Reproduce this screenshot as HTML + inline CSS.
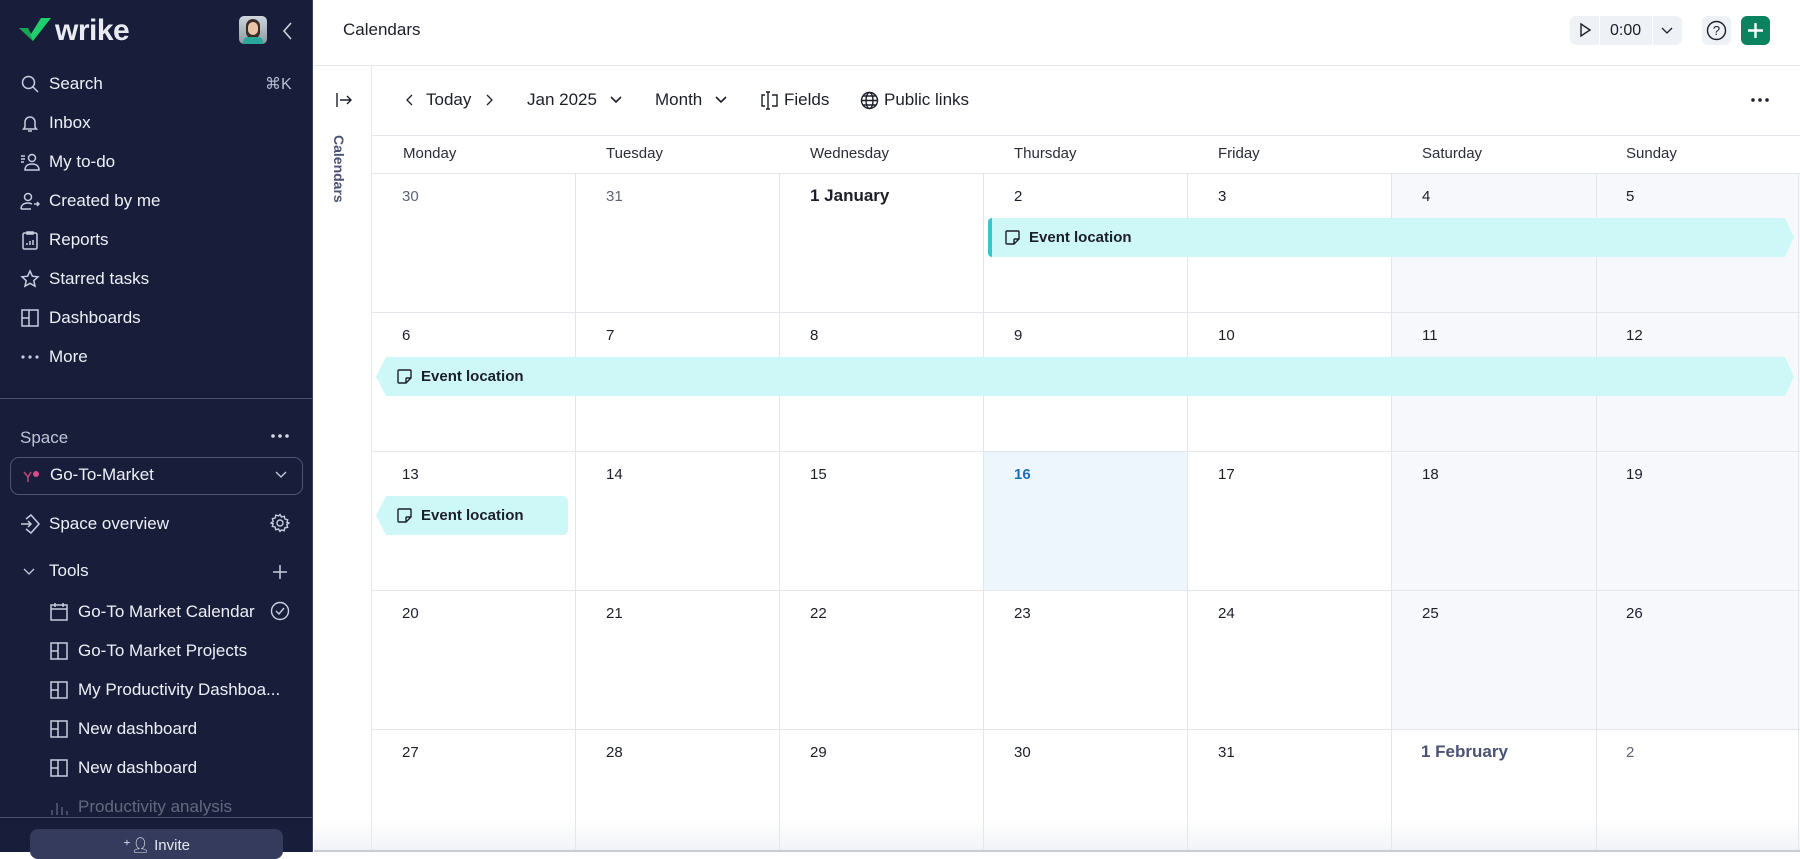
<!DOCTYPE html>
<html><head><meta charset="utf-8">
<style>
*{box-sizing:border-box;margin:0;padding:0}
body{width:1800px;height:852px;overflow:hidden;font-family:"Liberation Sans",sans-serif;background:#fff;position:relative;color:#1c1f2b}
.abs{position:absolute}
#sb{left:0;top:0;width:313px;height:852px;background:#181d3a;color:#eef0f7;border-right:1px solid #3a4060}
.nav{position:absolute;left:20px;font-size:17px;display:flex;align-items:center;height:24px;white-space:nowrap}
.nav svg{width:20px;height:20px;margin-right:9px;flex:none}
.sub{left:49px}
.hdr{font-size:15px;color:#2a2d3a;top:145px}
.dt{font-size:15px;color:#1c1f2b}
.vl{width:1px;background:#e3e6ec}
.hl{height:1px;background:#e3e6ec}
.ev{position:absolute;height:39px;background:#cdf8f7;font-size:15px;font-weight:bold;display:flex;align-items:center;color:#1c1f2b}
.ev svg{width:17px;height:17px;margin-right:8px}
.tb{font-size:17px;top:90px;color:#1c1f2b}
</style></head><body>
<div id="sb" class="abs">
  <svg class="abs" style="left:19px;top:16px" width="32" height="26" viewBox="0 0 32 26"><path d="M0 12 L9 12 L12 18 L22 2 L32 2 L14 25 Z" fill="#1fcf6b"/><path d="M0 12 L9 12 L14 25 Z" fill="#15a555"/></svg>
  <div class="abs" style="left:55px;top:14px;font-size:30px;font-weight:bold;color:#e9ebf3;letter-spacing:-0.5px">wrike</div>
  <div class="abs" style="left:239px;top:16px;width:28px;height:28px;border-radius:5px;background:linear-gradient(#cfd6dc,#8a9aa3);overflow:hidden"><div class="abs" style="left:7px;top:3px;width:14px;height:20px;border-radius:7px;background:#3b2c25"></div><div class="abs" style="left:9px;top:6px;width:10px;height:13px;border-radius:5px;background:#e8c4a8"></div><div class="abs" style="left:4px;top:21px;width:20px;height:10px;border-radius:6px;background:#2aa79a"></div></div>
  <svg class="abs" style="left:281px;top:21px" width="14" height="20" viewBox="0 0 14 20"><path d="M10 2 L3 10 L10 18" stroke="#cfd3e0" stroke-width="1.6" fill="none"/></svg>

  <div class="nav" style="top:72px"><svg viewBox="0 0 20 20" fill="none" stroke="#c9cde0" stroke-width="1.5"><circle cx="8.5" cy="8.5" r="6"/><path d="M13 13l5 5"/></svg>Search<span style="position:absolute;left:245px;color:#b9bdd0;font-size:16px">⌘K</span></div>
  <div class="nav" style="top:111px"><svg viewBox="0 0 20 20" fill="none" stroke="#c9cde0" stroke-width="1.5"><path d="M5 14V9a5 5 0 0110 0v5l1.5 2h-13z M8 18h4"/></svg>Inbox</div>
  <div class="nav" style="top:150px"><svg viewBox="0 0 20 20" fill="none" stroke="#c9cde0" stroke-width="1.5"><path d="M1 4h4M1 7h4M1 10h3"/><circle cx="12" cy="6" r="3.5"/><path d="M5 18c0-4 3-6 7-6s7 2 7 6z"/></svg>My to-do</div>
  <div class="nav" style="top:189px"><svg viewBox="0 0 20 20" fill="none" stroke="#c9cde0" stroke-width="1.5"><circle cx="8" cy="6" r="3.5"/><path d="M1 18c0-4 3-6 7-6 2 0 3 .5 4 1M1 18h10M14 13h5M17 11l2 2-2 2"/></svg>Created by me</div>
  <div class="nav" style="top:228px"><svg viewBox="0 0 20 20" fill="none" stroke="#c9cde0" stroke-width="1.5"><rect x="3" y="3" width="14" height="16" rx="1.5"/><path d="M7 2h6v2H7zM7 15v-2M10 15v-4M13 15v-5"/></svg>Reports</div>
  <div class="nav" style="top:267px"><svg viewBox="0 0 20 20" fill="none" stroke="#c9cde0" stroke-width="1.5"><path d="M10 2l2.4 5.2 5.6.6-4.2 3.8 1.2 5.6L10 14.4 5 17.2l1.2-5.6L2 7.8l5.6-.6z"/></svg>Starred tasks</div>
  <div class="nav" style="top:306px"><svg viewBox="0 0 20 20" fill="none" stroke="#c9cde0" stroke-width="1.5"><rect x="2" y="2" width="16" height="16"/><path d="M9 2v16M9 10H2"/></svg>Dashboards</div>
  <div class="nav" style="top:345px"><svg viewBox="0 0 20 20" fill="#c9cde0"><circle cx="3" cy="10" r="1.6"/><circle cx="10" cy="10" r="1.6"/><circle cx="17" cy="10" r="1.6"/></svg>More</div>

  <div class="abs" style="left:0;top:398px;width:312px;height:1px;background:#4a5070"></div>
  <div class="abs" style="left:20px;top:428px;font-size:17px;color:#c0c4d6">Space</div>
  <svg class="abs" style="left:270px;top:431px" width="20" height="10"><circle cx="3" cy="5" r="1.8" fill="#d8dbe6"/><circle cx="10" cy="5" r="1.8" fill="#d8dbe6"/><circle cx="17" cy="5" r="1.8" fill="#d8dbe6"/></svg>
  <div class="abs" style="left:10px;top:457px;width:293px;height:38px;border:1px solid #4c5374;border-radius:9px"></div>
  <svg class="abs" style="left:23px;top:469px" width="18" height="14"><path d="M1 3l4 5M5 8l3-5M5 8v5" stroke="#c0467a" stroke-width="1.5" fill="none"/><circle cx="13" cy="5" r="3" fill="#d94a86"/></svg>
  <div class="abs" style="left:50px;top:465px;font-size:17px">Go-To-Market</div>
  <svg class="abs" style="left:275px;top:471px" width="12" height="8"><path d="M1 1l5 5 5-5" stroke="#c9cde0" stroke-width="1.3" fill="none"/></svg>

  <div class="nav" style="top:512px"><svg viewBox="0 0 20 20" fill="none" stroke="#c9cde0" stroke-width="1.5"><path d="M1 10h10M8 7l3 3-3 3M6 5l5-4 8 9-8 9-5-4"/></svg>Space overview</div>
  <svg class="abs" style="left:270px;top:513px" width="20" height="20" viewBox="0 0 20 20" fill="none" stroke="#c9cde0" stroke-width="1.4"><circle cx="10" cy="10" r="3"/><path d="M10 1.5l1.5 2.5 2.8-.8.6 2.8 2.8.8-.8 2.8L19 10l-2.2 1.5.8 2.8-2.8.6-.6 2.8-2.8-.8L10 18.5 8.5 16l-2.8.8-.6-2.8-2.8-.6.8-2.8L1 10l2.2-1.5-.8-2.8 2.8-.8.6-2.8 2.8.8z"/></svg>
  <svg class="abs" style="left:23px;top:568px" width="12" height="8"><path d="M1 1l5 5 5-5" stroke="#c9cde0" stroke-width="1.3" fill="none"/></svg>
  <div class="abs" style="left:49px;top:561px;font-size:17px">Tools</div>
  <svg class="abs" style="left:272px;top:564px" width="16" height="16"><path d="M8 1v14M1 8h14" stroke="#c9cde0" stroke-width="1.5"/></svg>

  <div class="nav sub" style="top:600px"><svg viewBox="0 0 20 20" fill="none" stroke="#c9cde0" stroke-width="1.5"><rect x="2" y="3" width="16" height="15"/><path d="M2 7h16M6 1v4M14 1v4"/></svg>Go-To Market Calendar</div>
  <svg class="abs" style="left:270px;top:601px" width="20" height="20"><circle cx="10" cy="10" r="8.5" stroke="#c9cde0" stroke-width="1.4" fill="none"/><path d="M6 10l3 3 5-6" stroke="#c9cde0" stroke-width="1.4" fill="none"/></svg>
  <div class="nav sub" style="top:639px"><svg viewBox="0 0 20 20" fill="none" stroke="#c9cde0" stroke-width="1.5"><rect x="2" y="2" width="16" height="16"/><path d="M9 2v16M9 10H2"/></svg>Go-To Market Projects</div>
  <div class="nav sub" style="top:678px"><svg viewBox="0 0 20 20" fill="none" stroke="#c9cde0" stroke-width="1.5"><rect x="2" y="2" width="16" height="16"/><path d="M9 2v16M9 10H2"/></svg>My Productivity Dashboa...</div>
  <div class="nav sub" style="top:717px"><svg viewBox="0 0 20 20" fill="none" stroke="#c9cde0" stroke-width="1.5"><rect x="2" y="2" width="16" height="16"/><path d="M9 2v16M9 10H2"/></svg>New dashboard</div>
  <div class="nav sub" style="top:756px"><svg viewBox="0 0 20 20" fill="none" stroke="#c9cde0" stroke-width="1.5"><rect x="2" y="2" width="16" height="16"/><path d="M9 2v16M9 10H2"/></svg>New dashboard</div>
  <div class="nav sub" style="top:795px;opacity:.35"><svg viewBox="0 0 20 20" fill="none" stroke="#c9cde0" stroke-width="1.5"><path d="M3 18v-5M8 18V6M13 18v-8M18 18v-4"/></svg>Productivity analysis</div>
  <div class="abs" style="left:0;top:817px;width:312px;height:35px;background:#181d3a;border-top:1px solid #4a5070"></div>
  <div class="abs" style="left:30px;top:829px;width:253px;height:30px;border-radius:8px;background:#343b5c;text-align:center;font-size:15px;padding-top:7px;color:#e6e8f0">⁺&#x1F464;&#xFE0E; Invite</div>
</div>

<!-- top bar -->
<div class="abs" style="left:343px;top:20px;font-size:17px">Calendars</div>
<div class="abs" style="left:314px;top:65px;width:1486px;height:1px;background:#e6e8ee"></div>
<div class="abs" style="left:1570px;top:16px;width:112px;height:29px;border-radius:6px;background:#eef1f6"></div>
<div class="abs" style="left:1599px;top:16px;width:1px;height:29px;background:#fff"></div>
<div class="abs" style="left:1652px;top:16px;width:1px;height:29px;background:#fff"></div>
<svg class="abs" style="left:1578px;top:22px" width="14" height="16"><path d="M3 2l9 6-9 6z" stroke="#1c1f2b" stroke-width="1.4" fill="none"/></svg>
<div class="abs" style="left:1610px;top:22px;font-size:16px">0:00</div>
<svg class="abs" style="left:1661px;top:27px" width="12" height="8"><path d="M1 1l5 5 5-5" stroke="#1c1f2b" stroke-width="1.3" fill="none"/></svg>
<div class="abs" style="left:1702px;top:16px;width:29px;height:29px;border-radius:6px;background:#eef1f6"></div>
<svg class="abs" style="left:1706px;top:20px" width="21" height="21"><circle cx="10.5" cy="10.5" r="9" stroke="#1c1f2b" stroke-width="1.4" fill="none"/><text x="10.5" y="15" text-anchor="middle" font-size="13" font-family="Liberation Sans" fill="#1c1f2b">?</text></svg>
<div class="abs" style="left:1741px;top:16px;width:29px;height:29px;border-radius:6px;background:#0b8260"></div>
<svg class="abs" style="left:1747px;top:22px" width="17" height="17"><path d="M8.5 1v15M1 8.5h15" stroke="#fff" stroke-width="2.4"/></svg>

<!-- side strip -->
<div class="abs" style="left:371px;top:66px;width:1px;height:786px;background:#e6e8ee"></div>
<svg class="abs" style="left:335px;top:92px" width="18" height="16"><path d="M2 1v14M5 8h11M12 4l4 4-4 4" stroke="#1c1f2b" stroke-width="1.4" fill="none"/></svg>
<div class="abs" style="left:331px;top:135px;font-size:14px;font-weight:bold;color:#4a5275;writing-mode:vertical-rl">Calendars</div>

<!-- toolbar -->
<svg class="abs" style="left:405px;top:93px" width="10" height="14"><path d="M7 2L2 7l5 5" stroke="#1c1f2b" stroke-width="1.3" fill="none"/></svg>
<div class="abs tb" style="left:426px">Today</div>
<svg class="abs" style="left:484px;top:93px" width="10" height="14"><path d="M3 2l5 5-5 5" stroke="#1c1f2b" stroke-width="1.3" fill="none"/></svg>
<div class="abs tb" style="left:527px">Jan 2025</div>
<svg class="abs" style="left:610px;top:96px" width="12" height="8"><path d="M1 1l5 5 5-5" stroke="#1c1f2b" stroke-width="1.6" fill="none"/></svg>
<div class="abs tb" style="left:655px">Month</div>
<svg class="abs" style="left:715px;top:96px" width="12" height="8"><path d="M1 1l5 5 5-5" stroke="#1c1f2b" stroke-width="1.6" fill="none"/></svg>
<svg class="abs" style="left:760px;top:91px" width="20" height="19"><path d="M5 4H2v11h3M12 4h5v11h-5M6 1h4M6 18h4M8 1v17" stroke="#1c1f2b" stroke-width="1.4" fill="none"/></svg>
<div class="abs tb" style="left:784px">Fields</div>
<svg class="abs" style="left:860px;top:91px" width="19" height="19" fill="none" stroke="#1c1f2b" stroke-width="1.4"><circle cx="9.5" cy="9.5" r="8"/><ellipse cx="9.5" cy="9.5" rx="3.5" ry="8"/><path d="M1.5 9.5h16M3 5h13M3 14h13"/></svg>
<div class="abs tb" style="left:884px">Public links</div>
<svg class="abs" style="left:1750px;top:96px" width="20" height="8"><circle cx="3" cy="4" r="1.8" fill="#1c1f2b"/><circle cx="10" cy="4" r="1.8" fill="#1c1f2b"/><circle cx="17" cy="4" r="1.8" fill="#1c1f2b"/></svg>
<div class="abs" style="left:372px;top:135px;width:1428px;height:1px;background:#e3e6ec"></div>

<!-- header -->
<div class="abs hdr" style="left:403px">Monday</div>
<div class="abs hdr" style="left:606px">Tuesday</div>
<div class="abs hdr" style="left:810px">Wednesday</div>
<div class="abs hdr" style="left:1014px">Thursday</div>
<div class="abs hdr" style="left:1218px">Friday</div>
<div class="abs hdr" style="left:1422px">Saturday</div>
<div class="abs hdr" style="left:1626px">Sunday</div>
<div class="abs hl" style="left:372px;top:173px;width:1428px"></div>

<!-- backgrounds -->
<div class="abs" style="left:1391px;top:174px;width:409px;height:555px;background:#f6f8fb"></div>
<div class="abs" style="left:983px;top:452px;width:204px;height:138px;background:#eef6fd"></div>

<!-- grid lines -->
<div class="abs vl" style="left:575px;top:174px;height:678px"></div>
<div class="abs vl" style="left:779px;top:174px;height:678px"></div>
<div class="abs vl" style="left:983px;top:174px;height:678px"></div>
<div class="abs vl" style="left:1187px;top:174px;height:678px"></div>
<div class="abs vl" style="left:1391px;top:174px;height:678px"></div>
<div class="abs vl" style="left:1596px;top:174px;height:678px"></div>
<div class="abs vl" style="left:1798px;top:174px;height:678px"></div>
<div class="abs hl" style="left:372px;top:312px;width:1428px"></div>
<div class="abs hl" style="left:372px;top:451px;width:1428px"></div>
<div class="abs hl" style="left:372px;top:590px;width:1428px"></div>
<div class="abs hl" style="left:372px;top:729px;width:1428px"></div>

<!-- dates -->
<div class="abs dt" style="left:402px;top:188px;color:#5d6477">30</div>
<div class="abs dt" style="left:606px;top:188px;color:#5d6477">31</div>
<div class="abs dt" style="left:810px;top:186px;font-size:17px;font-weight:bold">1 January</div>
<div class="abs dt" style="left:1014px;top:188px">2</div>
<div class="abs dt" style="left:1218px;top:188px">3</div>
<div class="abs dt" style="left:1422px;top:188px">4</div>
<div class="abs dt" style="left:1626px;top:188px">5</div>

<div class="abs dt" style="left:402px;top:327px">6</div>
<div class="abs dt" style="left:606px;top:327px">7</div>
<div class="abs dt" style="left:810px;top:327px">8</div>
<div class="abs dt" style="left:1014px;top:327px">9</div>
<div class="abs dt" style="left:1218px;top:327px">10</div>
<div class="abs dt" style="left:1422px;top:327px">11</div>
<div class="abs dt" style="left:1626px;top:327px">12</div>

<div class="abs dt" style="left:402px;top:466px">13</div>
<div class="abs dt" style="left:606px;top:466px">14</div>
<div class="abs dt" style="left:810px;top:466px">15</div>
<div class="abs dt" style="left:1014px;top:466px;color:#1f6fb8;font-weight:bold">16</div>
<div class="abs dt" style="left:1218px;top:466px">17</div>
<div class="abs dt" style="left:1422px;top:466px">18</div>
<div class="abs dt" style="left:1626px;top:466px">19</div>

<div class="abs dt" style="left:402px;top:605px">20</div>
<div class="abs dt" style="left:606px;top:605px">21</div>
<div class="abs dt" style="left:810px;top:605px">22</div>
<div class="abs dt" style="left:1014px;top:605px">23</div>
<div class="abs dt" style="left:1218px;top:605px">24</div>
<div class="abs dt" style="left:1422px;top:605px">25</div>
<div class="abs dt" style="left:1626px;top:605px">26</div>

<div class="abs dt" style="left:402px;top:744px">27</div>
<div class="abs dt" style="left:606px;top:744px">28</div>
<div class="abs dt" style="left:810px;top:744px">29</div>
<div class="abs dt" style="left:1014px;top:744px">30</div>
<div class="abs dt" style="left:1218px;top:744px">31</div>
<div class="abs dt" style="left:1421px;top:742px;font-size:17px;font-weight:bold;color:#4a5275">1 February</div>
<div class="abs dt" style="left:1626px;top:744px;color:#5d6477">2</div>

<!-- events -->
<div class="ev" style="left:988px;top:218px;width:806px;border-left:4px solid #3cc4cc;border-radius:4px 0 0 4px;padding-left:12px;clip-path:polygon(0 0,797px 0,100% 50%,797px 100%,0 100%)">
<svg viewBox="0 0 17 17" fill="none" stroke="#1c1f2b" stroke-width="1.4"><path d="M3 2h11a1 1 0 011 1v7l-5 5H3a1 1 0 01-1-1V3a1 1 0 011-1zM15 10h-4a1 1 0 00-1 1v4"/></svg>Event location</div>
<div class="ev" style="left:376px;top:357px;width:1418px;padding-left:20px;clip-path:polygon(10px 0,1409px 0,100% 50%,1409px 100%,10px 100%,0 50%)">
<svg viewBox="0 0 17 17" fill="none" stroke="#1c1f2b" stroke-width="1.4"><path d="M3 2h11a1 1 0 011 1v7l-5 5H3a1 1 0 01-1-1V3a1 1 0 011-1zM15 10h-4a1 1 0 00-1 1v4"/></svg>Event location</div>
<div class="ev" style="left:376px;top:496px;width:192px;padding-left:20px;border-radius:0 5px 5px 0;clip-path:polygon(10px 0,100% 0,100% 100%,10px 100%,0 50%)">
<svg viewBox="0 0 17 17" fill="none" stroke="#1c1f2b" stroke-width="1.4"><path d="M3 2h11a1 1 0 011 1v7l-5 5H3a1 1 0 01-1-1V3a1 1 0 011-1zM15 10h-4a1 1 0 00-1 1v4"/></svg>Event location</div>

<div class="abs" style="left:314px;top:820px;width:1486px;height:32px;background:linear-gradient(rgba(240,242,246,0),rgba(232,234,240,.6))"></div>
<div class="abs" style="left:314px;top:850px;width:1486px;height:2px;background:#c8ccd4"></div>
</body></html>
